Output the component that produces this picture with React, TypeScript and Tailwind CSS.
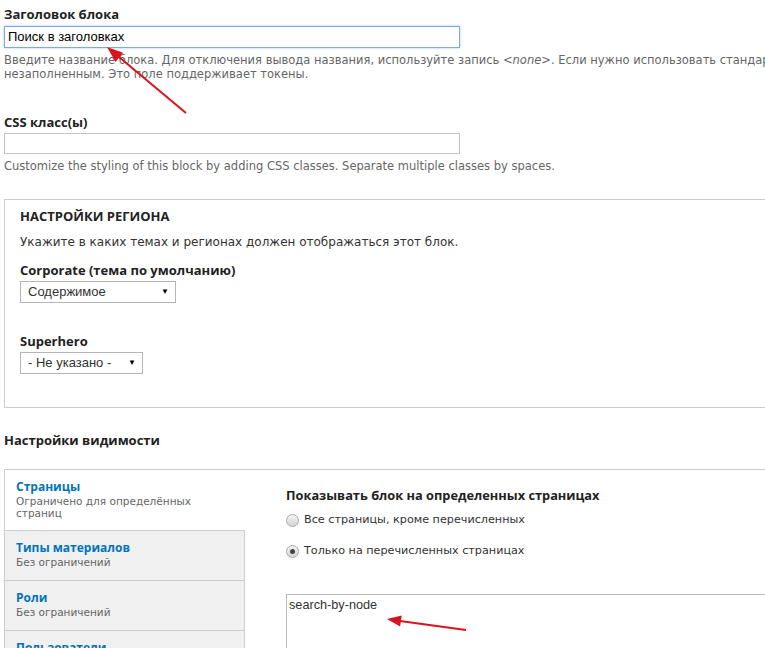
import React from 'react';

const body = { fontFamily: '"DejaVu Sans", Verdana, sans-serif' };
const head = { fontFamily: '"Open Sans", "DejaVu Sans", sans-serif' };
const arial = { fontFamily: '"Liberation Sans", Arial, sans-serif' };

function Select({ value, width }: { value: string; width: string }) {
  return (
    <div
      className={`flex h-[22px] items-center justify-between border border-[#b5b5b5] bg-white pl-[7px] pr-[6px] text-[13px] text-[#333] ${width}`}
      style={arial}
    >
      <span>{value}</span>
      <span className="text-[8px] text-black">▼</span>
    </div>
  );
}

function Radio({ checked, label }: { checked?: boolean; label: string }) {
  return (
    <div className="flex items-center gap-[5px]">
      <span className="flex h-[13px] w-[13px] items-center justify-center rounded-full border border-[#a9a9a9] bg-gradient-to-b from-[#f2f2f2] to-[#d6d6d6]">
        {checked && <span className="h-[5px] w-[5px] rounded-full bg-[#444]" />}
      </span>
      <span className="text-[11.2px] text-[#333]" style={body}>{label}</span>
    </div>
  );
}

function Tab({ title, desc, active }: { title: string; desc: React.ReactNode; active?: boolean }) {
  return (
    <div
      className={
        active
          ? 'bg-white px-[11px] pb-[11px] pt-[9px]'
          : 'border-r border-t border-[#ccc] bg-[#f0f0f0] px-[11px] pb-[12px] pt-[9px]'
      }
    >
      <div className="text-[12px] font-bold leading-[16px] text-[#0074bd]" style={head}>{title}</div>
      <div className="text-[10.5px] leading-[12px] text-[#666]" style={body}>{desc}</div>
    </div>
  );
}

export default function App() {
  return (
    <div className="relative h-[648px] w-[765px] overflow-hidden bg-white">
      <div className="w-[1000px] pl-[4px] pt-[5px]">
        <div className="text-[13px] font-bold leading-[18px] text-[#222]" style={head}>Заголовок блока</div>
        <div
          className="mt-[3px] flex h-[22px] w-[456px] items-center border border-[#7ea9e6] px-[3px] text-[13px] text-black shadow-[0_0_2px_#9ec0f0]"
          style={arial}
        >
          Поиск в заголовках
        </div>
        <div className="mt-[5px] whitespace-nowrap text-[11.5px] leading-[14px] text-[#666]" style={body}>
          Введите название блока. Для отключения вывода названия, используйте запись <em>&lt;none&gt;</em>. Если нужно использовать стандартное название блока, оставьте это поле
          <br />
          незаполненным. Это поле поддерживает токены.
        </div>

        <div className="mt-[32px] text-[13px] font-bold leading-[18px] text-[#222]" style={head}>CSS класс(ы)</div>
        <div className="mt-[2px] h-[21px] w-[456px] border border-[#c4c4c4]" />
        <div className="mt-[5px] whitespace-nowrap text-[11.5px] leading-[14px] text-[#666]" style={body}>
          Customize the styling of this block by adding CSS classes. Separate multiple classes by spaces.
        </div>

        <div className="mt-[26px] h-[209px] border border-[#ccc] px-[15px] pt-[7px]">
          <div className="text-[13px] font-bold leading-[18px] text-[#222]" style={head}>НАСТРОЙКИ РЕГИОНА</div>
          <div className="mt-[9px] text-[12px] leading-[16px] text-[#333]" style={body}>
            Укажите в каких темах и регионах должен отображаться этот блок.
          </div>
          <div className="mt-[11px] text-[13px] font-bold leading-[18px] text-[#222]" style={head}>Corporate (тема по умолчанию)</div>
          <div className="mt-[2px]">
            <Select value="Содержимое" width="w-[156px]" />
          </div>
          <div className="mt-[29px] text-[13px] font-bold leading-[18px] text-[#222]" style={head}>Superhero</div>
          <div className="mt-[2px]">
            <Select value="- Не указано -" width="w-[123px]" />
          </div>
        </div>

        <div className="mt-[23px] text-[13px] font-bold leading-[18px] text-[#222]" style={head}>Настройки видимости</div>

        <div className="mt-[20px] flex border-l border-t border-[#ccc]">
          <div className="w-[240px] shrink-0">
            <Tab title="Страницы" desc={<>Ограничено для определённых<br />страниц</>} active />
            <Tab title="Типы материалов" desc="Без ограничений" />
            <Tab title="Роли" desc="Без ограничений" />
            <Tab title="Пользователи" desc="Без ограничений" />
          </div>
          <div className="flex-1 pl-[41px] pt-[16px]">
            <div className="text-[12.8px] font-bold leading-[18px] text-[#222]" style={head}>
              Показывать блок на определенных страницах
            </div>
            <div className="mt-[8px] flex flex-col gap-[14px]">
              <Radio label="Все страницы, кроме перечисленных" />
              <Radio checked label="Только на перечисленных страницах" />
            </div>
            <div className="mt-[34px] h-[120px] border border-[#bbb] px-[2px] pt-[1px] text-[12.7px] text-[#333]" style={arial}>
              search-by-node
            </div>
          </div>
        </div>
      </div>

      <svg className="pointer-events-none absolute left-0 top-0" width="765" height="648">
        <line x1="186" y1="113" x2="119" y2="57" stroke="#d7141d" strokeWidth="2" />
        <polygon points="107,47 115.5,62 123.1,52.7" fill="#d7141d" />
        <line x1="466" y1="630" x2="400" y2="621" stroke="#d7141d" strokeWidth="2" />
        <polygon points="387,619 400.1,626.5 401.7,615.6" fill="#d7141d" />
      </svg>
    </div>
  );
}
